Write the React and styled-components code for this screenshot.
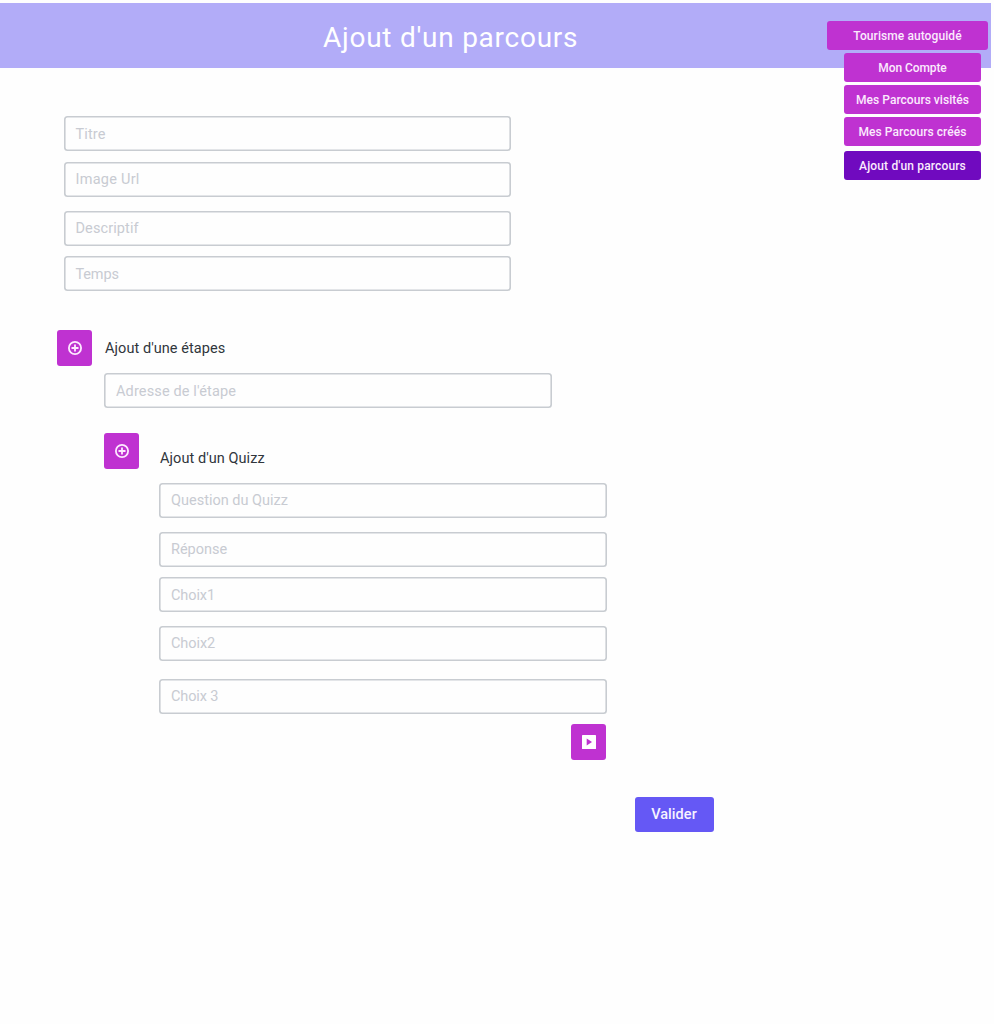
import React from "react";
import styled, { createGlobalStyle } from "styled-components";

const GlobalStyle = createGlobalStyle`
  * { box-sizing: border-box; }
  body {
    margin: 0;
    background: #fefefe;
    font-family: Roboto, "Open Sans", sans-serif;
  }
`;

const Page = styled.div`
  position: relative;
  width: 994px;
  height: 1024px;
  padding-top: 3px;
  overflow: hidden;
`;

const Header = styled.header`
  display: flex;
  align-items: center;
  width: 991px;
  height: 65px;
  padding-left: 323px;
  background: #b2acf8;
`;

const Title = styled.h1`
  margin: 4px 0 0;
  font-size: 28px;
  line-height: 36px;
  font-weight: 400;
  letter-spacing: ${(p) => p.$tracking}px;
  color: #fff;
  white-space: nowrap;
`;

const Menu = styled.nav`
  position: absolute;
  top: 21px;
  right: 6px;
  display: flex;
  flex-direction: column;
  align-items: flex-end;
`;

const MenuItem = styled.a`
  display: flex;
  align-items: center;
  justify-content: center;
  width: ${(p) => (p.$root ? 161 : 137)}px;
  height: 29px;
  margin-top: ${(p) => p.$gap || 0}px;
  margin-right: ${(p) => (p.$root ? 0 : 7)}px;
  border-radius: 3px;
  background: ${(p) => (p.$active ? "#700abf" : "#bf32d1")};
  color: #fbeafd;
  font-size: 12px;
  font-weight: 500;
  letter-spacing: ${(p) => p.$tracking}px;
  white-space: nowrap;
`;

const Form = styled.main`
  display: flex;
  flex-direction: column;
  padding: 48px 0 0 57px;
`;

const Fields = styled.div`
  display: flex;
  flex-direction: column;
  margin-left: ${(p) => p.$indent}px;
`;

const Field = styled.div`
  display: flex;
  align-items: center;
  width: 447.5px;
  height: 35px;
  margin-top: ${(p) => p.$gap || 0}px;
  padding: 1px 0 0 12px;
  border-radius: 3.5px;
  box-shadow: inset 0 0 0 1.6px #c8ccd1;
  color: #c8cbd2;
  font-size: 14.5px;
  letter-spacing: ${(p) => p.$tracking}px;
  white-space: nowrap;
`;

const SectionRow = styled.div`
  display: flex;
  align-items: center;
  gap: ${(p) => p.$space}px;
  height: 36px;
  margin-top: ${(p) => p.$gap}px;
  margin-left: ${(p) => p.$indent || 0}px;
`;

const SectionLabel = styled.span`
  padding-top: ${(p) => p.$drop || 0}px;
  color: #30363c;
  font-size: 14.5px;
  letter-spacing: ${(p) => p.$tracking}px;
  white-space: nowrap;
`;

const IconButton = styled.button`
  display: flex;
  align-items: center;
  justify-content: center;
  width: 35px;
  height: 35.5px;
  padding: 0;
  border: 0;
  border-radius: 3px;
  background: #bf32d1;
`;

const NextRow = styled.div`
  display: flex;
  justify-content: flex-end;
  width: 549px;
  margin-top: 10.5px;
`;

const SubmitRow = styled.div`
  display: flex;
  justify-content: flex-end;
  width: 656.5px;
  margin-top: 37.5px;
`;

const Submit = styled.button`
  width: 79px;
  height: 35px;
  padding: 0;
  border: 0;
  border-radius: 3px;
  background: #6558f5;
  color: #f5f3ff;
  font-family: inherit;
  font-size: 14.5px;
  font-weight: 500;
  letter-spacing: 0.05px;
`;

const PlusIcon = () => (
  <svg width="14" height="14" viewBox="0 0 14 14" fill="none" stroke="#fdeaff" strokeWidth="1.8">
    <circle cx="7" cy="7" r="6.1" />
    <path d="M7 3.5v7M3.5 7h7" />
  </svg>
);

const PlayIcon = () => (
  <svg width="14" height="14" viewBox="0 0 14 14">
    <rect width="14" height="14" rx="0.6" fill="#fff" />
    <path d="M4.7 3.4v7.2L10 7z" fill="#bf32d1" />
  </svg>
);

export default function App() {
  return (
    <>
      <GlobalStyle />
      <Page>
        <Header>
          <Title $tracking={0.74}>Ajout d'un parcours</Title>
        </Header>
        <Menu>
          <MenuItem $root $tracking={0.08}>Tourisme autoguidé</MenuItem>
          <MenuItem $gap={3} $tracking={-0.08}>Mon Compte</MenuItem>
          <MenuItem $gap={3} $tracking={0.03}>Mes Parcours visités</MenuItem>
          <MenuItem $gap={3} $tracking={0.06}>Mes Parcours créés</MenuItem>
          <MenuItem $active $gap={5} $tracking={0.15}>Ajout d'un parcours</MenuItem>
        </Menu>
        <Form>
          <Fields $indent={6.5}>
            <Field $tracking={0.15}>Titre</Field>
            <Field $gap={10.5} $tracking={0.25}>Image Url</Field>
            <Field $gap={14} $tracking={0.1}>Descriptif</Field>
            <Field $gap={10.5} $tracking={-0.15}>Temps</Field>
          </Fields>
          <SectionRow $gap={39} $space={13}>
            <IconButton aria-label="Ajouter une étape"><PlusIcon /></IconButton>
            <SectionLabel $tracking={0.06}>Ajout d'une étapes</SectionLabel>
          </SectionRow>
          <Fields $indent={47}>
            <Field $gap={7} $tracking={0.14}>Adresse de l'étape</Field>
          </Fields>
          <SectionRow $gap={25} $space={21} $indent={47}>
            <IconButton aria-label="Ajouter un quizz"><PlusIcon /></IconButton>
            <SectionLabel $drop={14} $tracking={0.06}>Ajout d'un Quizz</SectionLabel>
          </SectionRow>
          <Fields $indent={102}>
            <Field $gap={13.5} $tracking={0}>Question du Quizz</Field>
            <Field $gap={14} $tracking={0}>Réponse</Field>
            <Field $gap={10.5} $tracking={-0.1}>Choix1</Field>
            <Field $gap={13.5} $tracking={-0.08}>Choix2</Field>
            <Field $gap={18} $tracking={-0.12}>Choix 3</Field>
          </Fields>
          <NextRow>
            <IconButton aria-label="Suivant"><PlayIcon /></IconButton>
          </NextRow>
          <SubmitRow>
            <Submit>Valider</Submit>
          </SubmitRow>
        </Form>
      </Page>
    </>
  );
}
